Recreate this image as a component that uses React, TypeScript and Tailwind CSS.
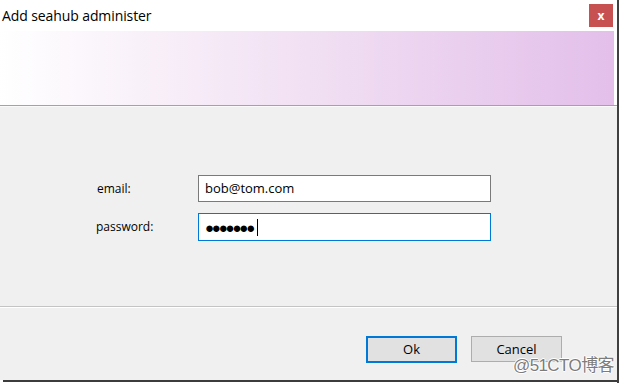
const font = { fontFamily: '"Open Sans", "Noto Sans", sans-serif' };

export default function App() {
  return (
    <div className="relative flex h-[386px] w-[623px] overflow-hidden bg-white text-black" style={font}>
      <div className="flex w-[617px] flex-col">
        <div className="flex h-[31px] items-center justify-between pl-[2px] pr-[4px]">
          <span className="text-[14px] leading-none tracking-[-0.1px]">Add seahub administer</span>
          <div className="flex h-[23px] w-[24px] items-center justify-center bg-[#c75050] text-[12px] font-bold leading-none text-white">
            x
          </div>
        </div>
        <div className="h-[74px] w-[614px] bg-gradient-to-r from-white via-[#f1e0f3] to-[#e3bfea]" />
        <div className="h-px bg-[#a3a3a3]" />
        <div className="h-px bg-[#fafafa]" />
        <div className="flex h-[199px] flex-col gap-[11px] bg-[#f0f0f0] pt-[68px]">
          <Row label="email:" labelPad="pl-[97px]">
            <div className="flex h-[27px] w-[293px] items-center border border-[#7a7a7a] bg-white pl-[6px] text-[13px]">
              bob@tom.com
            </div>
          </Row>
          <Row label="password:" labelPad="pl-[96px]">
            <div className="flex h-[28px] w-[293px] items-center border border-[#0078d7] bg-white pl-[6px]">
              <span className="text-[15px] leading-none tracking-[-2.2px]">●●●●●●●</span>
              <span className="ml-[4px] h-[17px] w-px bg-black" />
            </div>
          </Row>
        </div>
        <div className="h-px bg-[#c4c4c4]" />
        <div className="h-px bg-white" />
        <div className="flex h-[72px] gap-[14px] bg-[#f0f0f0] pl-[366px] pt-[28px]">
          <button className="h-[27px] w-[91px] border-2 border-[#0078d7] bg-[#e1e1e1] text-[13px] leading-none">
            Ok
          </button>
          <button className="h-[26px] w-[91px] border border-[#adadad] bg-[#e1e1e1] text-[13px] leading-none">
            Cancel
          </button>
        </div>
        <div className="ml-[3px] h-[2px] bg-[#3c3c3c]" />
      </div>
      <div className="h-[383px] w-[2px] bg-[#404040]" />
      <span
        className="absolute left-[513px] top-[357px] whitespace-nowrap text-[17px] leading-none tracking-[-0.6px] text-[#7c7c7c]"
        style={{
          fontFamily: '"Liberation Sans", "Noto Sans CJK SC", sans-serif',
          textShadow: '1px 0 #fff, -1px 0 #fff, 0 1px #fff, 0 -1px #fff',
        }}
      >
        @51CTO博客
      </span>
    </div>
  );
}

function Row({ label, labelPad, children }: { label: string; labelPad: string; children: React.ReactNode }) {
  return (
    <div className="flex items-center">
      <div className={`w-[198px] text-[12px] ${labelPad}`}>{label}</div>
      {children}
    </div>
  );
}
